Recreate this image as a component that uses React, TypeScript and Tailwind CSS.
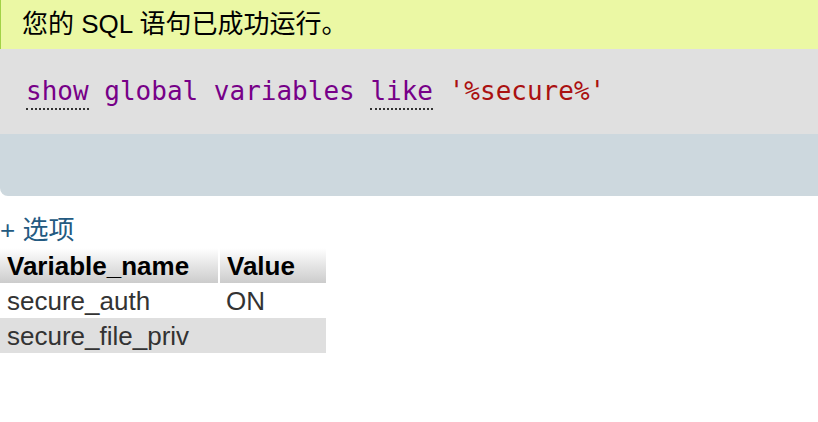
export default function App() {
  return (
    <div className="w-[818px] h-[422px] bg-white overflow-hidden font-['Liberation_Sans','Noto_Sans_CJK_SC',sans-serif]">
      <div className="h-[49px] bg-[#ebf8a4] border-l border-[#a2d246] pl-[21px] flex items-center text-[26px] text-black">
        您的 SQL 语句已成功运行。
      </div>
      <div className="rounded-bl-[8px] overflow-hidden">
        <div className="h-[85px] bg-[#e0e0e0] pl-[26px] pt-[22px] font-['DejaVu_Sans_Mono',monospace] text-[26px] leading-[40px] whitespace-pre">
          <span className="text-[#770088] border-b-2 border-dotted border-[#333] pb-[2px]">show</span>
          <span className="text-[#770088]"> global variables </span>
          <span className="text-[#770088] border-b-2 border-dotted border-[#333] pb-[2px]">like</span>
          <span className="text-[#aa1111]"> '%secure%'</span>
        </div>
        <div className="h-[62px] bg-[#cdd8de]" />
      </div>
      <div className="mt-[16px] text-[26px] leading-[36px] text-[#235a81]">+ 选项</div>
      <table className="border-collapse text-[26px] leading-[30px]">
        <thead>
          <tr>
            <th className="w-[219px] h-[35px] text-left font-bold text-black pl-[7px] bg-gradient-to-b from-white to-[#cccccc] border-r-2 border-white">
              Variable_name
            </th>
            <th className="w-[107px] h-[35px] text-left font-bold text-black pl-[7px] bg-gradient-to-b from-white to-[#cccccc]">
              Value
            </th>
          </tr>
        </thead>
        <tbody className="text-[#333]">
          <tr className="h-[35px] bg-white">
            <td className="pl-[7px]">secure_auth</td>
            <td className="pl-[7px]">ON</td>
          </tr>
          <tr className="h-[35px] bg-[#dfdfdf]">
            <td className="pl-[7px]">secure_file_priv</td>
            <td className="pl-[7px]"></td>
          </tr>
        </tbody>
      </table>
    </div>
  );
}
